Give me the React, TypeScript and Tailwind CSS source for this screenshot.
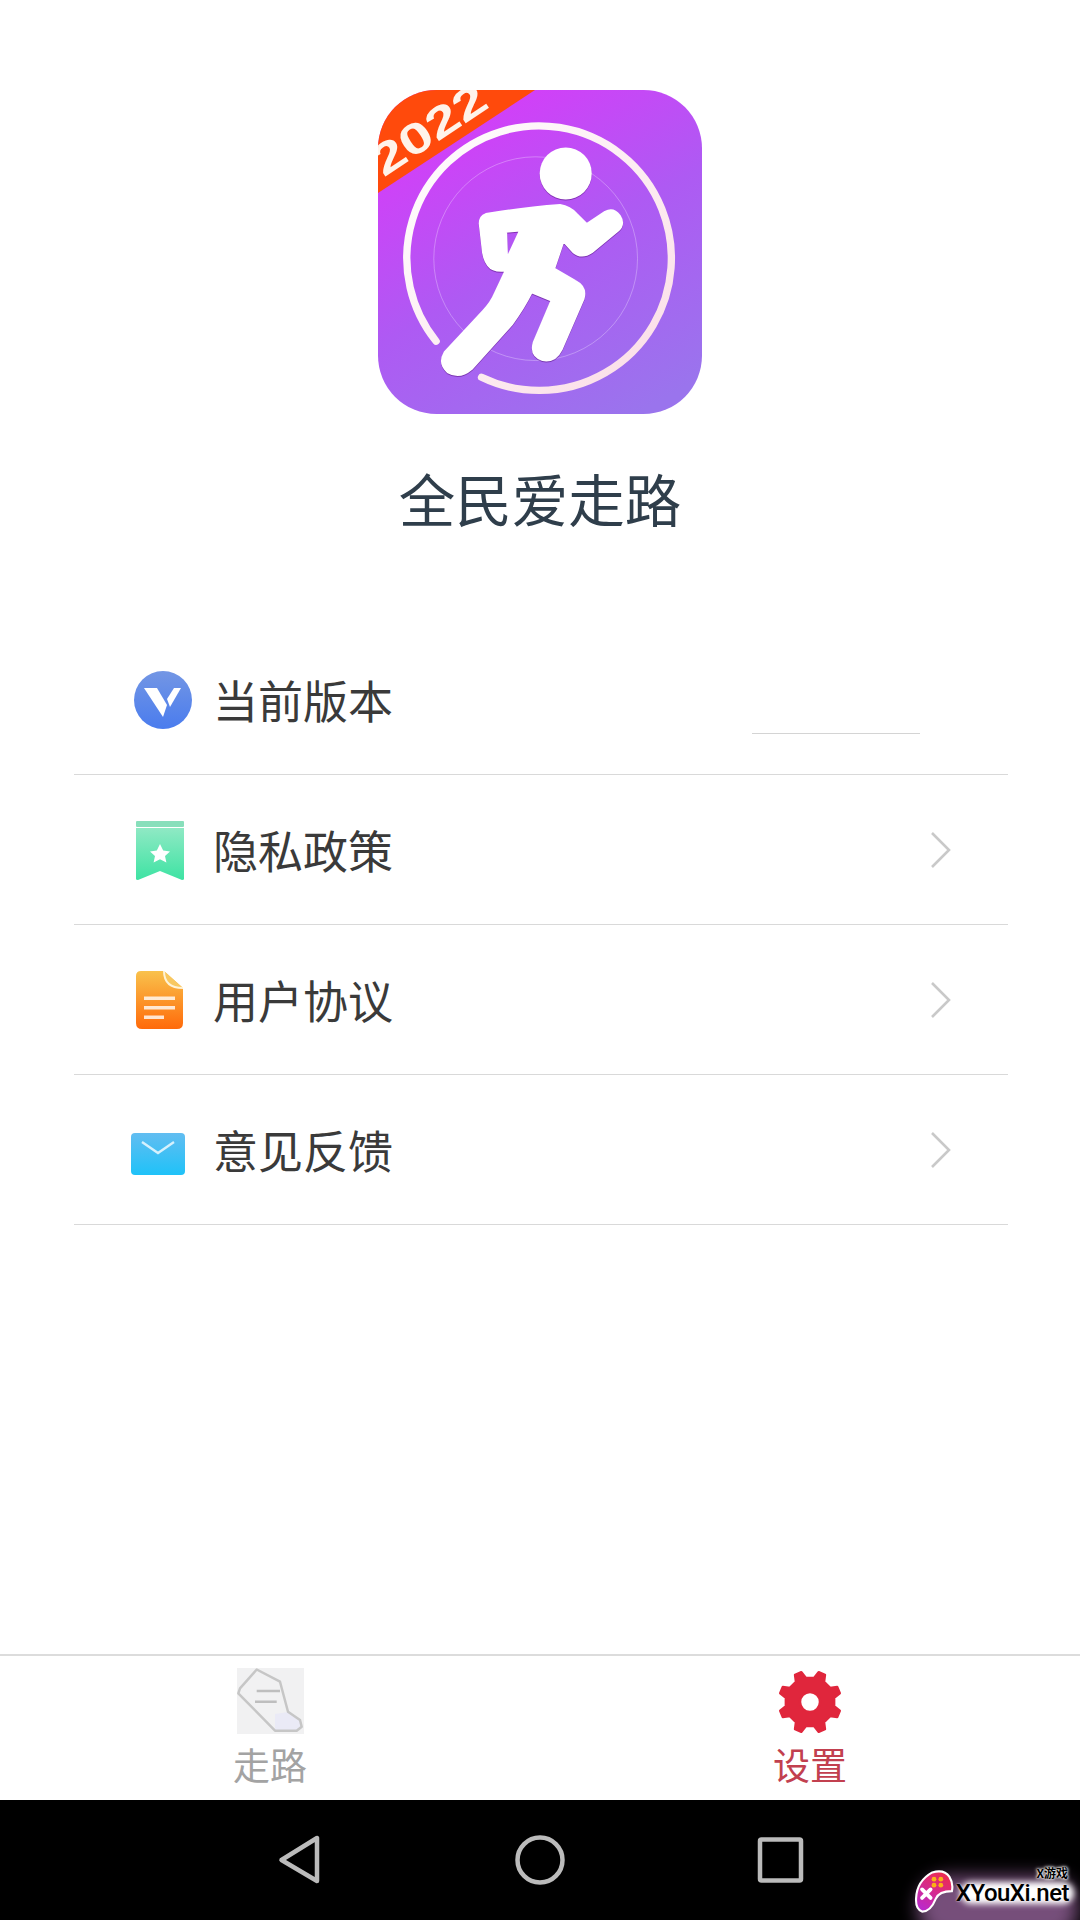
import React from "react";

const FONT = "font-['Noto_Sans_CJK_SC','Noto_Sans',sans-serif]";

function AppIcon() {
  return (
    <svg viewBox="55 60 970 970" className="w-[324px] h-[324px] block">
      <defs>
        <linearGradient id="bg" x1="0.25" y1="0" x2="0.8" y2="1">
          <stop offset="0" stopColor="#d93af9" />
          <stop offset="0.5" stopColor="#ae5af3" />
          <stop offset="1" stopColor="#9a74ed" />
        </linearGradient>
        <linearGradient id="ring" x1="0" y1="0" x2="1" y2="1">
          <stop offset="0" stopColor="#ffffff" />
          <stop offset="1" stopColor="#fbdce6" />
        </linearGradient>
        <clipPath id="rc">
          <rect x="55" y="60" width="970" height="970" rx="175" />
        </clipPath>
      </defs>
      <g clipPath="url(#rc)">
        <rect x="55" y="60" width="970" height="970" fill="url(#bg)" />
        <polygon points="55,60 525,60 55,368" fill="#ff4a0c" />
        <text
          x="0"
          y="0"
          transform="translate(72,322) rotate(-33.5)"
          fontFamily="'Liberation Sans',sans-serif"
          fontWeight="700"
          fontSize="130"
          fill="#fff3ea"
          textLength="385"
          lengthAdjust="spacingAndGlyphs"
        >
          2022
        </text>
      </g>
      <circle cx="527" cy="565" r="305" fill="none" stroke="#ffffff" strokeOpacity="0.35" strokeWidth="2.5" />
      <path
        d="M365 920 A396 396 0 1 0 229 812"
        fill="none"
        stroke="url(#ring)"
        strokeWidth="22"
        strokeLinecap="round"
      />
      <g filter="drop-shadow(0 3px 2px rgba(90,20,130,0.55))">
        <circle cx="617" cy="310" r="78" fill="#fff" />
        <path
          fillRule="evenodd"
          fill="#fff"
          stroke="#fff"
          strokeWidth="7"
          strokeLinejoin="round"
          d="M378 432 Q500 412 600 405 Q630 410 650 432 L680 462 L735 425 Q760 412 778 436 Q795 462 772 482 L695 545 Q665 565 640 545 L610 512 L582 595 L645 632 Q680 650 670 685 L605 835 Q585 875 548 868 Q510 855 522 815 L575 690 L515 665 Q490 715 455 762 L335 895 Q300 925 265 905 Q235 880 255 845 L370 722 Q395 695 405 670 L438 600 Q400 605 385 585 Q370 565 368 530 L360 460 Q360 438 378 432 Z M438 484 L481 480 L441 566 Z"
        />
      </g>
    </svg>
  );
}

function Chevron() {
  return (
    <svg width="22" height="38" viewBox="0 0 22 38" className="block">
      <path d="M2 2 L19 19 L2 36" fill="none" stroke="#c9c9c9" strokeWidth="2.6" />
    </svg>
  );
}

function VersionIcon() {
  return (
    <svg width="58" height="58" viewBox="0 0 58 58" className="block">
      <defs>
        <linearGradient id="v" x1="0" y1="0" x2="0" y2="1">
          <stop offset="0" stopColor="#7396e4" />
          <stop offset="1" stopColor="#4a7cee" />
        </linearGradient>
      </defs>
      <circle cx="29" cy="29" r="29" fill="url(#v)" />
      <path d="M10 17 L23 17 L33 34 L29 46 Z" fill="#ffffff" />
      <path d="M33 28 L40 17 L47 17 L36 36 Z" fill="#ffffff" />
    </svg>
  );
}

function BookmarkIcon() {
  return (
    <svg width="48" height="60" viewBox="0 0 48 60" className="block">
      <defs>
        <linearGradient id="b" x1="0" y1="0" x2="0" y2="1">
          <stop offset="0" stopColor="#8fe9c4" />
          <stop offset="1" stopColor="#3ee3a3" />
        </linearGradient>
      </defs>
      <rect x="0" y="0" width="48" height="6" rx="1" fill="#88dfbb" />
      <path d="M0 7 H48 V58 Q48 59 46 59 L24 50 L2 59 Q0 59 0 58 Z" fill="url(#b)" />
      <path
        d="M24 23 L27.2 29.5 L34 30.4 L29 35 L30.4 41.6 L24 38.3 L17.6 41.6 L19 35 L14 30.4 L20.8 29.5 Z"
        fill="#ffffff"
      />
    </svg>
  );
}

function DocIcon() {
  return (
    <svg width="47" height="58" viewBox="0 0 47 58" className="block">
      <defs>
        <linearGradient id="d" x1="0" y1="0" x2="0" y2="1">
          <stop offset="0" stopColor="#f9c24c" />
          <stop offset="1" stopColor="#ff6a0a" />
        </linearGradient>
      </defs>
      <path d="M5 0 H28 L47 17 V52 Q47 58 41 58 H6 Q0 58 0 52 V5 Q0 0 5 0 Z" fill="url(#d)" />
      <path d="M28 0 Q28 17 47 17" fill="#f8c860" stroke="#fff3d6" strokeWidth="2" />
      <rect x="8" y="25.5" width="31" height="3.5" fill="#fff" fillOpacity="0.8" />
      <rect x="8" y="35" width="31" height="3.5" fill="#fff" fillOpacity="0.8" />
      <rect x="8" y="44.5" width="20" height="3.5" fill="#fff" fillOpacity="0.8" />
    </svg>
  );
}

function MailIcon() {
  return (
    <svg width="54" height="42" viewBox="0 0 54 42" className="block">
      <defs>
        <linearGradient id="m" x1="0" y1="0" x2="0" y2="1">
          <stop offset="0" stopColor="#62bdf1" />
          <stop offset="1" stopColor="#1fc2f8" />
        </linearGradient>
      </defs>
      <rect width="54" height="42" rx="4" fill="url(#m)" />
      <path d="M11 9 L27 20 L43 9" fill="none" stroke="#d6f1fd" strokeWidth="2.4" />
    </svg>
  );
}

function Row({
  icon,
  label,
  pad,
  children,
}: {
  icon: React.ReactNode;
  label: string;
  pad: string;
  children?: React.ReactNode;
}) {
  return (
    <div className="h-[150px] flex items-center border-b border-[#d9d9d9]">
      <div className={`w-[139px] shrink-0 ${pad}`}>{icon}</div>
      <span className="text-[45px] leading-none text-[#3a3a3a]">{label}</span>
      {children}
    </div>
  );
}

function Arrow() {
  return (
    <div className="ml-auto mr-[56px]">
      <Chevron />
    </div>
  );
}

function Gear() {
  const n = 8;
  const pts: string[] = [];
  for (let i = 0; i < n; i++) {
    const a = (i * 2 * Math.PI) / n - Math.PI / 2 + Math.PI / 8;
    const w = Math.PI / n;
    const list: [number, number][] = [
      [24.5, a - w * 0.55],
      [31, a - w * 0.28],
      [31, a + w * 0.28],
      [24.5, a + w * 0.55],
    ];
    for (const [r, t] of list) pts.push(`${(32 + r * Math.cos(t)).toFixed(2)} ${(33 + r * Math.sin(t)).toFixed(2)}`);
  }
  const d = `M${pts.join(" L")} Z M32 23 A10 10 0 1 0 32 43 A10 10 0 1 0 32 23 Z`;
  return (
    <svg width="64" height="66" viewBox="0 0 64 66" className="block">
      <path d={d} fillRule="evenodd" fill="#e0263c" stroke="#e0263c" strokeWidth="2.5" strokeLinejoin="round" />
    </svg>
  );
}

function Shoe() {
  return (
    <svg width="67" height="66" viewBox="0 0 67 66" className="block bg-[#f1f1f2]">
      <path d="M38 46 L51 44 L63 52 L64.7 58.7 L59.7 62.7 L38 62.7 Z" fill="#eaeaf6" />
      <path
        d="M19.7 1.5 L43 13.7 L51 43.7 L63 52 L64.7 58.7 L59.7 62.7 L38 62.7 L1.3 25.3 L3 20.3 Z"
        fill="none"
        stroke="#c6c6c6"
        strokeWidth="2.5"
        strokeLinejoin="round"
      />
      <path d="M19.7 23 H43 M18 33.7 H39.7" stroke="#bebebe" strokeWidth="2.5" />
    </svg>
  );
}

function GamePad() {
  return (
    <svg width="44" height="46" viewBox="0 0 48 54" className="block">
      <defs>
        <linearGradient id="gp" x1="0.7" y1="0" x2="0.2" y2="1">
          <stop offset="0" stopColor="#ee2b4f" />
          <stop offset="1" stopColor="#b92ad0" />
        </linearGradient>
      </defs>
      <path
        d="M22 4 Q36 0 42 9 Q47 17 45 26 Q30 26 26 35 Q20 50 10 50 Q2 47 3 34 Q4 14 22 4 Z"
        fill="url(#gp)"
        stroke="#ffffff"
        strokeWidth="2.5"
      />
      <circle cx="24" cy="12" r="2.8" fill="#fbb116" />
      <circle cx="32" cy="12" r="2.8" fill="#fbb116" />
      <circle cx="24" cy="19" r="2.8" fill="#fbb116" />
      <circle cx="32" cy="19" r="2.8" fill="#fbb116" />
      <path d="M10 24 L20 34 M20 24 L10 34" stroke="#ffffff" strokeWidth="4.5" strokeLinecap="round" />
    </svg>
  );
}

export default function App() {
  return (
    <div className={`relative w-[1080px] h-[1920px] bg-white flex flex-col overflow-hidden ${FONT}`}>
      <div className="flex-1 flex flex-col">
        <div className="pt-[90px] flex flex-col items-center">
          <AppIcon />
          <div className="mt-[51px] text-[56.5px] leading-[64px] text-[#2f3e4b]">全民爱走路</div>
        </div>

        <div className="mt-[96px] ml-[74px] w-[934px]">
          <Row icon={<VersionIcon />} label="当前版本" pad="pl-[60px]">
            <div className="ml-auto mr-[88px] mb-[40px] self-end w-[168px] h-px bg-[#d4d4d4]" />
          </Row>
          <Row icon={<BookmarkIcon />} label="隐私政策" pad="pl-[62px] pt-[2px]">
            <Arrow />
          </Row>
          <Row icon={<DocIcon />} label="用户协议" pad="pl-[62px]">
            <Arrow />
          </Row>
          <Row icon={<MailIcon />} label="意见反馈" pad="pl-[57px] pt-[8px]">
            <Arrow />
          </Row>
        </div>
      </div>

      <div className="h-[146px] border-t-2 border-[#dcdcdc] flex">
        <div className="w-[540px] flex flex-col items-center pt-[12px]">
          <Shoe />
          <span className="mt-[8px] text-[37px] leading-[44px] text-[#a3a3a3]">走路</span>
        </div>
        <div className="w-[540px] flex flex-col items-center pt-[13px]">
          <Gear />
          <span className="mt-[7px] text-[37px] leading-[44px] text-[#c2404f]">设置</span>
        </div>
      </div>

      <div className="h-[120px] bg-black flex items-center relative">
        <svg width="1080" height="120" viewBox="0 0 1080 120" className="block">
          <path
            d="M317 38 L317 81 L281.5 60 Z"
            fill="none"
            stroke="#bbbbbb"
            strokeWidth="4.5"
            strokeLinejoin="round"
          />
          <circle cx="540" cy="60" r="22.5" fill="none" stroke="#bbbbbb" strokeWidth="4.5" />
          <rect x="760" y="39.5" width="41" height="41" rx="1.5" fill="none" stroke="#bbbbbb" strokeWidth="4.5" />
        </svg>

        <div className="absolute right-0 bottom-0 w-[170px] h-[52px]">
          <div className="absolute left-[8px] right-[2px] top-[8px] bottom-[-20px] rounded-[30px] bg-[#c583cc] blur-[9px] opacity-60" />
          <div className="absolute left-[50px] right-[6px] top-[14px] h-[22px] rounded-[12px] bg-white blur-[3px]" />
          <div className="absolute left-[2px] top-[1px]">
            <GamePad />
          </div>
          <div className="absolute right-[12px] top-[-2px] text-[12px] leading-[13px] font-bold text-black [text-shadow:0_0_2px_#fff,0_0_3px_#fff,0_0_4px_#fff]">
            X游戏
          </div>
          <div className="absolute right-[11px] top-[11px] font-['Roboto',sans-serif] text-[24px] leading-[28px] font-medium tracking-[-0.5px] text-black [text-shadow:0_0_2px_#fff]">
            XYouXi.net
          </div>
        </div>
      </div>
    </div>
  );
}
